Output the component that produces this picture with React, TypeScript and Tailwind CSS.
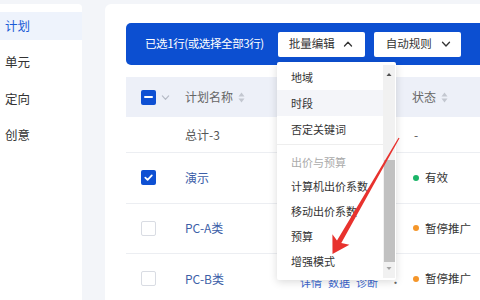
import React from "react";

function SortIcon() {
  return (
    <svg width="7" height="11" viewBox="0 0 7 11" className="shrink-0">
      <path d="M3.5 0.5 L6.5 4.5 L0.5 4.5 Z" fill="#c3c7d0" />
      <path d="M3.5 10.5 L6.5 6.5 L0.5 6.5 Z" fill="#c3c7d0" />
    </svg>
  );
}

function Chevron({ up, color = "#333", size = 10 }: { up?: boolean; color?: string; size?: number }) {
  return (
    <svg width={size} height={size} viewBox="0 0 10 10" className="shrink-0">
      {up ? (
        <path d="M1.5 7 L5 3.3 L8.5 7" fill="none" stroke={color} strokeWidth="1.3" strokeLinecap="round" strokeLinejoin="round" />
      ) : (
        <path d="M1.5 3.3 L5 7 L8.5 3.3" fill="none" stroke={color} strokeWidth="1.3" strokeLinecap="round" strokeLinejoin="round" />
      )}
    </svg>
  );
}

function CheckBox({ state }: { state: "none" | "checked" | "indeterminate" }) {
  if (state === "none") {
    return <div className="w-[15px] h-[15px] rounded-[2px] border border-[#d9dce3] bg-white shrink-0" />;
  }
  return (
    <div className="w-[15px] h-[15px] rounded-[2px] bg-[#0e50d3] flex items-center justify-center shrink-0">
      {state === "checked" ? (
        <svg width="11" height="11" viewBox="0 0 11 11">
          <path d="M2.3 5.6 L4.6 7.8 L8.8 3.4" fill="none" stroke="#fff" strokeWidth="1.8" strokeLinecap="round" strokeLinejoin="round" />
        </svg>
      ) : (
        <div className="w-[9px] h-[2.5px] bg-white rounded-[1px]" />
      )}
    </div>
  );
}

function Row({
  check,
  name,
  status,
  dot,
  links,
}: {
  check: "none" | "checked";
  name: string;
  status: string;
  dot: string;
  links?: boolean;
}) {
  return (
    <div className="h-[50.5px] border-b border-[#eceef2] flex items-center">
      <div className="w-[59px] pl-[15px] flex items-center">
        <CheckBox state={check} />
      </div>
      <div className="w-[115px] text-[12px] text-[#3d5fa8]">{name}</div>
      <div className="w-[112px] flex items-center text-[11px] text-[#3a66cf] gap-[6px] pt-[7px]">
        {links && (
          <>
            <span>详情</span>
            <span>数据</span>
            <span>诊断</span>
            <span className="ml-[6px] text-[#666]">·</span>
          </>
        )}
      </div>
      <div className="flex items-center gap-[6px] text-[11.5px] text-[#333]">
        <span className="w-[6px] h-[6px] rounded-full ml-[1px]" style={{ backgroundColor: dot }} />
        <span>{status}</span>
      </div>
    </div>
  );
}

export default function App() {
  const menuItems1 = ["地域", "时段", "否定关键词"];
  const menuItems2 = ["计算机出价系数", "移动出价系数", "预算", "增强模式"];
  return (
    <div className="relative w-[480px] h-[300px] overflow-hidden bg-[#f3f5f9] flex pt-[4px] font-['Noto_Sans_CJK_SC','Noto_Sans',sans-serif]">
      {/* sidebar */}
      <aside className="w-[82px] bg-white rounded-tr-[4px] flex flex-col pt-[8px] shrink-0">
        {["计划", "单元", "定向", "创意"].map((t, i) => (
          <div
            key={t}
            className={
              "h-[28px] mb-[8.5px] flex items-center pl-[5px] text-[12.5px] " +
              (i === 0 ? "bg-[#eef3fc] text-[#1a5bd6]" : "text-[#333]")
            }
          >
            {t}
          </div>
        ))}
      </aside>

      {/* main card */}
      <main className="relative ml-[23px] flex-1 bg-white rounded-tl-[6px] pl-[21px] pt-[19px] min-w-0">
        <div className="w-[400px]">
          {/* selection bar */}
          <div className="h-[42px] bg-[#0c4fd1] rounded-l-[5px] flex items-center pl-[19px]">
            <span className="text-white text-[11.5px] tracking-[-0.4px]">已选1行(或选择全部3行)</span>
            <div className="ml-[14px] w-[87px] h-[25px] bg-white rounded-[2px] flex items-center pl-[11px] gap-[8px] text-[11.5px] text-[#333]">
              <span>批量编辑</span>
              <Chevron up />
            </div>
            <div className="ml-[9px] w-[87px] h-[25px] bg-white rounded-[2px] flex items-center pl-[12px] gap-[9px] text-[11.5px] text-[#333]">
              <span>自动规则</span>
              <Chevron />
            </div>
          </div>

          {/* table header */}
          <div className="mt-[12px] h-[40px] bg-[#edf0f8] flex items-center">
            <div className="w-[59px] pl-[15px] flex items-center gap-[5px]">
              <CheckBox state="indeterminate" />
              <Chevron color="#b5bac5" size={9} />
            </div>
            <div className="w-[227px] flex items-center gap-[5px] text-[12px] text-[#666]">
              <span>计划名称</span>
              <SortIcon />
            </div>
            <div className="flex items-center gap-[5px] text-[12px] text-[#666]">
              <span>状态</span>
              <SortIcon />
            </div>
          </div>

          {/* total row */}
          <div className="h-[36px] border-b border-[#eceef2] flex items-center">
            <div className="w-[59px]" />
            <div className="w-[227px] text-[12px] text-[#555]">总计-3</div>
            <div className="text-[12px] text-[#555] pl-[2px]">-</div>
          </div>

          <Row check="checked" name="演示" status="有效" dot="#1bb568" />
          <Row check="none" name="PC-A类" status="暂停推广" dot="#f5962a" />
          <Row check="none" name="PC-B类" status="暂停推广" dot="#f5962a" links />
        </div>

        {/* dropdown menu */}
        <div className="absolute z-10 left-[172px] top-[58px] w-[119px] h-[218px] bg-white rounded-[2px] shadow-[0_2px_8px_rgba(0,0,0,0.15)] text-[11px] text-[#333]">
          <div className="mr-[13px] pt-[2px]">
            {menuItems1.map((t, i) => (
              <div key={t} className={"h-[26px] flex items-center pl-[14px] " + (i === 1 ? "bg-[#f4f5f9]" : "")}>
                {t}
              </div>
            ))}
            <div className="my-[2px] h-px bg-[#eeeeee]" />
            <div className="mt-[5px] h-[24px] flex items-center pl-[14px] text-[#aaa]">出价与预算</div>
            {menuItems2.map((t) => (
              <div key={t} className="h-[25px] flex items-center pl-[14px] whitespace-nowrap">
                {t}
              </div>
            ))}
          </div>
          {/* scrollbar */}
          <div className="absolute right-[1px] top-[3px] bottom-[2px] w-[12px] bg-[#f1f1f1]">
            <svg width="12" height="8" viewBox="0 0 12 8" className="absolute left-0 top-[6px]">
              <path d="M6 2 L8.5 5 L3.5 5 Z" fill="#505050" />
            </svg>
            <div className="absolute left-[1px] right-0 top-[95px] h-[102px] bg-[#c1c1c1]" />
            <svg width="12" height="8" viewBox="0 0 12 8" className="absolute left-0 bottom-[6px]">
              <path d="M6 6 L8.5 3 L3.5 3 Z" fill="#a3a3a3" />
            </svg>
          </div>
        </div>
      </main>

      {/* red annotation arrow */}
      <svg width="480" height="300" viewBox="0 0 480 300" className="absolute z-20 left-0 top-0 pointer-events-none">
        <polygon
          points="399.5,138.3 341.3,242.9 349.4,244.7 332.5,254 332.4,234.3 337.0,240.4 398.5,137.7"
          fill="#e8322e"
        />
      </svg>
    </div>
  );
}
